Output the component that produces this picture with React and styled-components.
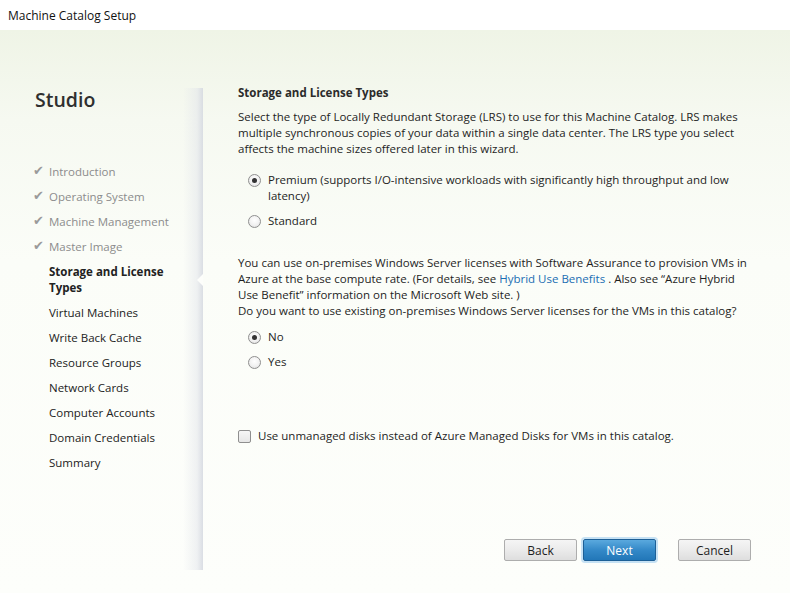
import React from "react";
import styled, { createGlobalStyle } from "styled-components";

const Global = createGlobalStyle`
  html, body {
    margin: 0;
    padding: 0;
  }
  body {
    font-family: "Open Sans", "Noto Sans", sans-serif;
    font-size: 11.5px;
    color: #1e1e1e;
  }
`;

const Window = styled.div`
  width: 790px;
  height: 593px;
  display: flex;
  flex-direction: column;
  overflow: hidden;
`;

const TitleBar = styled.div`
  height: 30px;
  flex: none;
  background: #ffffff;
  display: flex;
  align-items: center;
  padding-left: 8px;
  font-size: 12px;
  color: #111;
`;

const Body = styled.div`
  flex: 1;
  display: flex;
  background: linear-gradient(180deg, #eff4e6 0px, #f6f9f1 90px, #fbfdf8 230px, #fdfefb 100%);
`;

const Sidebar = styled.div`
  width: 203px;
  flex: none;
  padding-top: 58px;
  box-sizing: border-box;
`;

const Brand = styled.div`
  padding-left: 35px;
  font-size: 19.5px;
  line-height: 24px;
  font-weight: 600;
  color: #2f2f2f;
  margin-bottom: 52px;
`;

const Steps = styled.ul`
  list-style: none;
  margin: 0;
  padding: 0;
  display: flex;
  flex-direction: column;
  gap: 9px;
`;

const Step = styled.li`
  position: relative;
  padding-left: 49px;
  line-height: 16px;
  white-space: nowrap;
  color: ${(p) => (p.$done ? "#8c8c8c" : "#222")};
  font-weight: ${(p) => (p.$active ? 700 : 400)};
`;

const Check = styled.span`
  position: absolute;
  left: 33px;
  top: -1px;
  font-family: "DejaVu Sans", sans-serif;
  font-size: 13px;
  color: #9a9a9a;
`;

const Panel = styled.div`
  position: relative;
  flex: 1;
  margin-top: 55px;
  height: 485px;
  padding-left: 35px;
  padding-right: 20px;
  box-sizing: border-box;
  display: flex;
  flex-direction: column;

  &::before {
    content: "";
    position: absolute;
    left: -20px;
    top: 3px;
    bottom: 0;
    width: 20px;
    background: linear-gradient(90deg, rgba(230, 233, 238, 0) 0%, rgba(225, 228, 234, 0.5) 70%, rgba(212, 216, 224, 0.85) 100%);
  }
`;

const Notch = styled.div`
  position: absolute;
  left: -6px;
  top: 189px;
  width: 0;
  height: 0;
  border-top: 6px solid transparent;
  border-bottom: 6px solid transparent;
  border-right: 6px solid #fdfefb;
`;

const Heading = styled.div`
  font-weight: 700;
  line-height: 16px;
  color: #2b2b2b;
  margin-bottom: 8px;
`;

const Para = styled.p`
  margin: 0;
  margin-top: ${(p) => p.$top || 0}px;
  line-height: 16px;
  white-space: nowrap;
`;

const Link = styled.span`
  color: #1a6db3;
`;

const Options = styled.div`
  display: flex;
  flex-direction: column;
  gap: 9px;
  margin-top: ${(p) => p.$top}px;
  padding-left: 10px;
`;

const Option = styled.label`
  display: flex;
  align-items: flex-start;
  gap: 7px;
  line-height: 16px;
  white-space: nowrap;
`;

const Radio = styled.span`
  flex: none;
  width: 11px;
  height: 11px;
  margin-top: 2px;
  border-radius: 50%;
  border: 1px solid #8f8f8f;
  background: radial-gradient(circle at 50% 40%, #ffffff 0%, #f1f1f1 55%, #d9d9d9 100%);
  display: flex;
  align-items: center;
  justify-content: center;

  &::after {
    content: "";
    display: ${(p) => (p.$on ? "block" : "none")};
    width: 5px;
    height: 5px;
    border-radius: 50%;
    background: #333;
  }
`;

const CheckRow = styled.label`
  display: flex;
  align-items: center;
  gap: 7px;
  margin-top: 58px;
  line-height: 16px;
  white-space: nowrap;
`;

const Box = styled.span`
  width: 11px;
  height: 11px;
  border: 1px solid #8f8f8f;
  border-radius: 2px;
  background: linear-gradient(180deg, #f6f6f6 0%, #e6e6e6 100%);
`;

const Buttons = styled.div`
  margin-top: auto;
  margin-bottom: 9px;
  display: flex;
  padding-left: 266px;
`;

const Button = styled.button`
  width: 73px;
  height: 22px;
  margin-right: ${(p) => p.$mr || 0}px;
  font-family: "Open Sans", "Noto Sans", sans-serif;
  font-size: 12px;
  border-radius: 2px;
  padding: 0;
  color: ${(p) => (p.$primary ? "#ffffff" : "#1e1e1e")};
  border: 1px solid ${(p) => (p.$primary ? "#1d5f96" : "#adadad")};
  background: ${(p) =>
    p.$primary
      ? "linear-gradient(180deg, #5aa9de 0%, #3489c8 50%, #2277b8 100%)"
      : "linear-gradient(180deg, #f5f5f5 0%, #ebebeb 50%, #dedede 100%)"};
  box-shadow: ${(p) => (p.$primary ? "0 0 0 2px rgba(130, 190, 235, 0.45)" : "none")};
`;

const steps = [
  { label: "Introduction", done: true },
  { label: "Operating System", done: true },
  { label: "Machine Management", done: true },
  { label: "Master Image", done: true },
  { label: ["Storage and License", "Types"], active: true },
  { label: "Virtual Machines" },
  { label: "Write Back Cache" },
  { label: "Resource Groups" },
  { label: "Network Cards" },
  { label: "Computer Accounts" },
  { label: "Domain Credentials" },
  { label: "Summary" },
];

export default function App() {
  return (
    <Window>
      <Global />
      <TitleBar>Machine Catalog Setup</TitleBar>
      <Body>
        <Sidebar>
          <Brand>Studio</Brand>
          <Steps>
            {steps.map((s, i) => (
              <Step key={i} $done={s.done} $active={s.active}>
                {s.done && <Check>✔</Check>}
                {Array.isArray(s.label) ? (
                  <>
                    {s.label[0]}
                    <br />
                    {s.label[1]}
                  </>
                ) : (
                  s.label
                )}
              </Step>
            ))}
          </Steps>
        </Sidebar>
        <Panel>
          <Notch />
          <Heading>Storage and License Types</Heading>
          <Para>
            Select the type of Locally Redundant Storage (LRS) to use for this Machine Catalog. LRS makes
            <br />
            multiple synchronous copies of your data within a single data center. The LRS type you select
            <br />
            affects the machine sizes offered later in this wizard.
          </Para>
          <Options $top={15}>
            <Option>
              <Radio $on />
              <span>
                Premium (supports I/O-intensive workloads with significantly high throughput and low
                <br />
                latency)
              </span>
            </Option>
            <Option>
              <Radio />
              <span>Standard</span>
            </Option>
          </Options>
          <Para $top={26}>
            You can use on-premises Windows Server licenses with Software Assurance to provision VMs in
            <br />
            Azure at the base compute rate. (For details, see <Link>Hybrid Use Benefits</Link> . Also see “Azure Hybrid
            <br />
            Use Benefit” information on the Microsoft Web site. )
            <br />
            Do you want to use existing on-premises Windows Server licenses for the VMs in this catalog?
          </Para>
          <Options $top={10}>
            <Option>
              <Radio $on />
              <span>No</span>
            </Option>
            <Option>
              <Radio />
              <span>Yes</span>
            </Option>
          </Options>
          <CheckRow>
            <Box />
            <span>Use unmanaged disks instead of Azure Managed Disks for VMs in this catalog.</span>
          </CheckRow>
          <Buttons>
            <Button $mr={6}>Back</Button>
            <Button $primary $mr={22}>Next</Button>
            <Button>Cancel</Button>
          </Buttons>
        </Panel>
      </Body>
    </Window>
  );
}
